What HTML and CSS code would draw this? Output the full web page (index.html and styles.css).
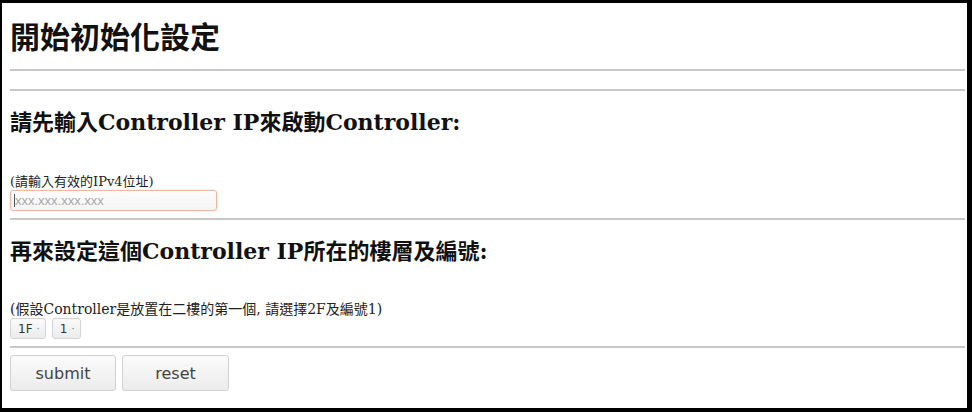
FILE: index.html
```html
<!DOCTYPE html>
<html lang="zh-Hant">
<head>
<meta charset="utf-8">
<title>開始初始化設定</title>
<link rel="stylesheet" href="styles.css">
</head>
<body>
<div class="frame">
  <h1 class="title">開始初始化設定</h1>
  <hr class="rule rule-top">
  <hr class="rule rule-second">
  <form class="setup">
    <h2 class="section-title">請先輸入Controller IP來啟動Controller:</h2>
    <label class="hint hint-ip" for="ip">(請輸入有效的IPv4位址)</label>
    <div class="ip-input">
      <span class="caret-line"></span>
      <input class="ip-field" id="ip" type="text" placeholder="xxx.xxx.xxx.xxx">
    </div>
    <hr class="rule rule-mid">
    <h2 class="section-title section-title-2">再來設定這個Controller IP所在的樓層及編號:</h2>
    <div class="hint hint-floor">(假設Controller是放置在二樓的第一個, 請選擇2F及編號1)</div>
    <div class="selects">
      <span class="select-btn">1F <span class="caret">·</span></span>
      <span class="select-btn">1 <span class="caret">·</span></span>
    </div>
    <hr class="rule rule-bottom">
    <div class="actions">
      <button type="button" class="btn">submit</button>
      <button type="button" class="btn">reset</button>
    </div>
  </form>
</div>
</body>
</html>
```
FILE: styles.css
```css
html, body {
  margin: 0;
  padding: 0;
  background: #000;
}
.frame {
  box-sizing: border-box;
  width: 972px;
  height: 412px;
  background: #fff;
  border-style: solid;
  border-color: #000;
  border-width: 3px 5px 4px 2px;
  padding: 0 2px 0 8px;
  overflow: hidden;
  color: #111;
}
.title {
  margin: 17px 0 0;
  font-family: "DejaVu Sans", "Noto Sans CJK TC", sans-serif;
  font-size: 30px;
  line-height: 36px;
  font-weight: bold;
  color: #111;
}
.rule {
  border: 0;
  height: 2px;
  background: #c8c8c8;
  margin: 0;
}
.rule-top { margin-top: 13px; }
.rule-second { margin-top: 18px; }
.setup {
  display: flex;
  flex-direction: column;
  align-items: flex-start;
  margin: 0;
}
.setup .rule { align-self: stretch; }
.section-title {
  margin: 17px 0 0;
  font-family: "DejaVu Serif", "Noto Sans CJK TC", serif;
  font-size: 22px;
  line-height: 28px;
  font-weight: bold;
  color: #111;
}
.hint {
  font-family: "DejaVu Serif", "Noto Sans CJK TC", serif;
  font-size: 13px;
  line-height: 16px;
  color: #222;
}
.hint-ip { margin-top: 38px; }
.ip-input {
  box-sizing: border-box;
  width: 207px;
  height: 21px;
  display: flex;
  align-items: center;
  padding: 0 3px;
  border: 1px solid #f0b8a4;
  border-radius: 3px;
  background: linear-gradient(#fdfdfd, #f4f4f4);
  box-shadow: 0 0 2px rgba(240, 150, 120, 0.4);
}
.caret-line {
  width: 1px;
  height: 13px;
  background: #555;
  flex: none;
}
.ip-field {
  flex: 1;
  min-width: 0;
  border: 0;
  padding: 0;
  margin: 0;
  background: transparent;
  font-family: "Liberation Sans", sans-serif;
  font-size: 13px;
  color: #333;
  outline: none;
}
.ip-field::placeholder { color: #a8a8a8; }
.rule-mid { margin-top: 7px; }
.section-title-2 { margin-top: 17px; }
.hint-floor { margin-top: 36px; font-size: 14px; }
.selects {
  display: flex;
  gap: 6px;
  margin-top: 1px;
}
.select-btn {
  box-sizing: border-box;
  height: 21px;
  display: flex;
  align-items: center;
  gap: 4px;
  padding: 0 5px 0 7px;
  border: 1px solid #d4d4d4;
  border-radius: 3px;
  background: linear-gradient(#fafafa, #ececec);
  font-family: "DejaVu Sans", sans-serif;
  font-size: 12px;
  color: #333;
}
.caret { font-size: 10px; color: #777; }
.rule-bottom { margin-top: 7px; }
.actions {
  display: flex;
  gap: 6px;
  margin-top: 7px;
}
.btn {
  box-sizing: border-box;
  width: 106px;
  height: 36px;
  margin: 0;
  border: 1px solid #d2d2d2;
  border-radius: 3px;
  background: linear-gradient(#fbfbfb, #ececec);
  font-family: "DejaVu Sans", sans-serif;
  font-size: 16px;
  color: #444;
}
.btn + .btn { width: 107px; }
```
